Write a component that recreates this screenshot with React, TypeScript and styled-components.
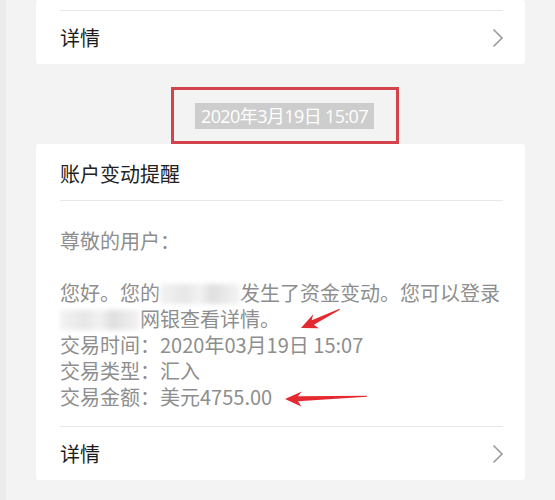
import styled, { createGlobalStyle } from "styled-components";

const GlobalStyle = createGlobalStyle`
    html, body {
        margin: 0;
        padding: 0;
        background-color: #f3f3f3;
    }
    body {
        font-family: "Noto Sans CJK SC", "Noto Sans", sans-serif;
    }
`;

const Page = styled.div`
    width: 555px;
    height: 500px;
    overflow: hidden;
    display: flex;
    flex-direction: column;
    box-sizing: border-box;
    border-left: 6px solid #ebebeb;
    padding-left: 30px;
`;

const Card = styled.div`
    position: relative;
    width: 489px;
    background-color: #ffffff;
    border-radius: 3px;
    padding: 0 22px 0 24px;
    box-sizing: border-box;
`;

const Title = styled.div`
    height: 57px;
    display: flex;
    align-items: center;
    font-size: 20px;
    color: #222;
    border-bottom: 1px solid #e8e8e8;
    box-sizing: border-box;
    padding-top: 2px;
`;

const Body = styled.div<{ $tail?: boolean }>`
    padding: ${(p) => (p.$tail ? "10px 0 0" : "27px 0 16px")};
    font-size: 20px;
    line-height: 26px;
    color: #8e8e8e;
    border-bottom: 1px solid #e8e8e8;
`;

const Line = styled.div`
    height: 26px;
    line-height: 26px;
    white-space: nowrap;
`;

const Redact = styled.span<{ $w: number }>`
    display: inline-block;
    width: ${(p) => p.$w}px;
    height: 20px;
    vertical-align: -3px;
    background: linear-gradient(90deg, #f3f3f3 0%, #e7e7e7 30%, #f2f2f2 50%, #dfdfdf 65%, #f4f4f4 100%);
    filter: blur(2px);
`;

const DetailRow = styled.div`
    height: 53px;
    display: flex;
    align-items: center;
    justify-content: space-between;
    font-size: 20px;
    color: #1c1c1c;
    box-sizing: border-box;
`;

const Chevron = styled.svg`
    width: 12px;
    height: 20px;
    margin-right: -1px;
`;

const TimeWrap = styled.div`
    height: 80px;
    display: flex;
    justify-content: center;
    align-items: flex-end;
    padding-right: 22px;
`;

const TimeFrame = styled.div`
    width: 228px;
    height: 57px;
    border: 3px solid #d3434b;
    box-sizing: border-box;
    display: flex;
    align-items: center;
    justify-content: center;
`;

const TimeLabel = styled.span`
    background-color: #cdcdcd;
    color: #ffffff;
    font-size: 18px;
    line-height: 26px;
    padding: 0 6px;
    font-family: "Open Sans", "Noto Sans CJK SC", sans-serif;
    letter-spacing: -0.6px;
`;

const Marks = styled.svg`
    position: absolute;
    left: 0;
    top: 0;
    width: 489px;
    height: 335px;
    pointer-events: none;
`;

const arrowPath = (len: number) =>
    `M0,0 L17,-7 L13,-2.2 L${len},-0.4 L${len},0.6 L13,2.6 L16,8 Z`;

const Arrow = ({ x, y, angle, len }: { x: number; y: number; angle: number; len: number }) => (
    <path d={arrowPath(len)} fill="#e42a30" transform={`translate(${x} ${y}) rotate(${angle})`} />
);

const Detail = () => (
    <DetailRow>
        <span>详情</span>
        <Chevron viewBox="0 0 12 20">
            <path d="M1.5 1.5 L10 10 L1.5 18.5" fill="none" stroke="#9a9a9a" strokeWidth="1.6" />
        </Chevron>
    </DetailRow>
);

export default function App() {
    return (
        <>
            <GlobalStyle />
            <Page>
                <Card>
                    <Body $tail />
                    <Detail />
                </Card>

                <TimeWrap>
                    <TimeFrame>
                        <TimeLabel>2020年3月19日 15:07</TimeLabel>
                    </TimeFrame>
                </TimeWrap>

                <Card>
                    <Title>账户变动提醒</Title>
                    <Body>
                        <Line>尊敬的用户：</Line>
                        <Line />
                        <Line>
                            您好。您的<Redact $w={80} />发生了资金变动。您可以登录
                        </Line>
                        <Line>
                            <Redact $w={80} />网银查看详情。
                        </Line>
                        <Line>交易时间：2020年03月19日 15:07</Line>
                        <Line>交易类型：汇入</Line>
                        <Line>交易金额：美元4755.00</Line>
                    </Body>
                    <Detail />
                    <Marks viewBox="0 0 489 335">
                        <Arrow x={265} y={184} angle={-26} len={43} />
                        <Arrow x={249} y={255} angle={-2} len={82} />
                    </Marks>
                </Card>
            </Page>
        </>
    );
}
